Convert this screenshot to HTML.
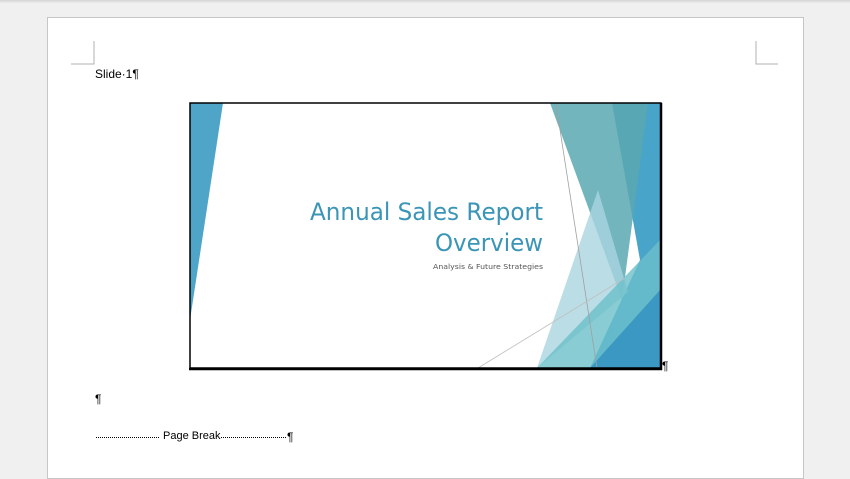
<!DOCTYPE html>
<html><head><style>
html,body{margin:0;padding:0;width:850px;height:459px;overflow:hidden;background:#f0f0f0;font-family:"Liberation Sans",sans-serif;}
.top{position:absolute;left:0;top:0;width:850px;height:3px;background:linear-gradient(#d4d4d4,#ececec);}
.page{position:absolute;left:47px;top:17px;width:755px;height:460px;background:#fff;border:1px solid #c6c6c6;}
.t{position:absolute;font-size:12px;color:#000;}
</style></head><body>
<div class="top"></div>
<div class="page"></div>
<svg style="position:absolute;left:0;top:0" width="850" height="459">
<path d="M71 64H94V41" fill="none" stroke="#b0b0b0"/>
<path d="M778 64H756V41" fill="none" stroke="#b0b0b0"/>
<rect x="190" y="103" width="471" height="265" fill="#fff"/>
<polygon points="190,103 223,103 190,320" fill="#4ea5c8"/>
<polygon points="612,103 660,103 660,368 590,368 640,260" fill="#3f9fc7" opacity="0.95"/>
<polygon points="550,103 648,103 622,300" fill="#5ba8b0" opacity="0.85"/>
<polygon points="598,190 628,292 537,368" fill="#a9d4e0" opacity="0.8"/>
<polygon points="537,368 660,240 660,368" fill="#6bbfc9" opacity="0.8"/>
<polygon points="590,368 660,290 660,368" fill="#3a98c2"/>
<line x1="556" y1="104" x2="597" y2="368" stroke="#a0a0a0" stroke-width="0.8"/>
<line x1="478" y1="368" x2="625" y2="278" stroke="#c0c0c0" stroke-width="0.8"/>
<text x="310" y="220" textLength="233" lengthAdjust="spacingAndGlyphs" font-family="DejaVu Sans, sans-serif" font-size="24" fill="#3a95b6">Annual Sales Report</text>
<text x="435" y="251" textLength="108" lengthAdjust="spacingAndGlyphs" font-family="DejaVu Sans, sans-serif" font-size="24" fill="#3a95b6">Overview</text>
<text x="433" y="269" textLength="110" lengthAdjust="spacingAndGlyphs" font-family="DejaVu Sans, sans-serif" font-size="7" fill="#555">Analysis &amp; Future Strategies</text>
<path d="M190 103H661V368H190Z" fill="none" stroke="#000" stroke-width="1.5"/>
<path d="M661 103V369H189" fill="none" stroke="#000" stroke-width="2.5"/>
<line x1="96" y1="437.5" x2="160" y2="437.5" stroke="#000" stroke-dasharray="1,1"/>
<line x1="221" y1="437.5" x2="287" y2="437.5" stroke="#000" stroke-dasharray="1,1"/>
</svg>
<div class="t" style="left:95px;top:67px">Slide·1¶</div>
<div class="t" style="left:662px;top:359px">¶</div>
<div class="t" style="left:95px;top:392px">¶</div>
<div class="t" style="left:163px;top:430px;font-size:11px">Page Break</div>
<div class="t" style="left:287px;top:430px">¶</div>
</body></html>
